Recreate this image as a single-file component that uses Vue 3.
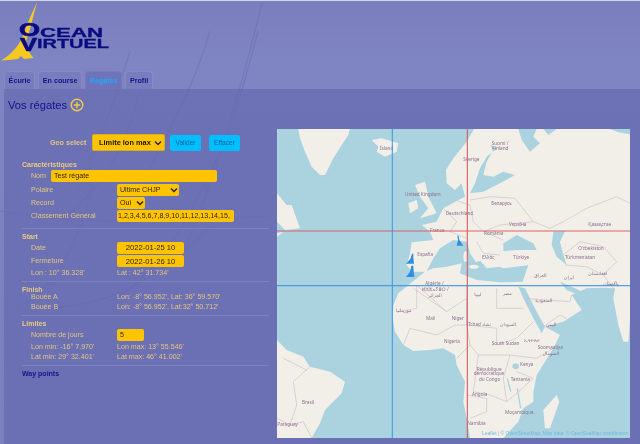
<script setup>
const tabs = ['Écurie', 'En course', 'Régates', 'Profil'];

const labels = [
  [330, 75, 'Ísland'], [405, 213, 'United Kingdom'], [527, 270, 'Deutschland'], [480, 320, 'France'],
  [442, 392, 'España'], [580, 107, 'Sverige'], [665, 60, 'Suomi /'], [667, 74, 'Finland'],
  [664, 239, 'Беларусь'], [717, 303, 'Україна'], [955, 303, 'Қазақстан'], [642, 330, 'România'],
  [925, 376, 'Oʻzbekiston'], [885, 401, 'Türkmenistan'], [730, 401, 'Türkiye'], [636, 403, 'Ελλάς'],
  [466, 481, 'Algérie /'], [455, 499, 'ⵍⵣⵣⴰⵢⴻⵔ /'], [475, 515, 'الجزائر'], [378, 560, 'موريتانيا'],
  [468, 585, 'Mali'], [545, 585, 'Niger'], [594, 602, 'Tchad'], [636, 602, 'تشاد'],
  [690, 602, 'السودان'], [613, 512, 'ليبيا'], [698, 510, 'مصر'], [795, 532, 'السعودية'],
  [828, 602, 'اليمن'], [522, 653, 'Nigeria'], [665, 661, 'South Sudan'], [762, 651, 'ኢትዮጵያ'],
  [803, 673, 'Soomaaliya'], [818, 690, 'الصومال'], [750, 723, 'Kenya'], [620, 737, 'République'],
  [611, 751, 'démocratique'], [627, 768, 'du Congo'], [722, 769, 'Tanzania'], [606, 812, 'Angola'],
  [705, 866, 'Moçambique'], [592, 900, 'Namibia'], [96, 837, 'Brasil'], [22, 903, 'Paraguay'],
  [792, 456, 'العراق'], [882, 463, 'ايران'], [955, 449, 'افغانستان'], [1000, 480, 'پاکستان']
];

const borders = [
  'M555 225 L600 240 L610 290 L640 320 L700 345',
  'M520 250 L560 290 L540 320 L590 340',
  'M600 225 L660 215 L735 220 L790 290 L840 310',
  'M640 320 L690 300 L790 290',
  'M620 350 L640 385 L690 390',
  'M840 310 L880 290 L950 250 L1040 215 L1080 235',
  'M880 390 L930 350 L1000 365 L1040 410 L1000 450',
  'M885 420 L950 425 L1000 450 L1030 490',
  'M430 490 L530 560 L590 520 L590 600 L680 610',
  'M385 560 L440 550 L440 480 L530 560',
  'M590 480 L590 600 L600 660 L560 700',
  'M680 490 L680 550 L760 550',
  'M400 660 L420 610 L500 630 L555 600 L590 600',
  'M680 610 L680 660 L740 640 L790 590',
  'M600 660 L625 690 L720 690 L800 700 L850 670',
  'M625 690 L610 800 L660 810 L710 830 L745 800',
  'M720 690 L700 760 L710 830',
  'M590 810 L650 820 L650 860 L600 880',
  'M745 800 L790 760 L740 740',
  'M760 520 L900 530 L905 510',
  'M820 605 L870 570 L890 580',
  'M120 725 L70 770 L80 840 L60 900 L21 880',
  'M40 700 L110 735',
  'M125 939 L100 890 L60 900'
];
</script>

<template>
  <div class="page">
    <svg class="streaks" viewBox="0 0 640 444" aria-hidden="true">
      <path d="M262 2 C250 50 236 110 205 190" />
      <path d="M210 30 C196 80 170 130 125 215" />
      <path d="M130 50 C118 90 108 120 78 190" />
      <path d="M258 30 C240 100 225 150 180 260" />
      <path d="M140 90 C125 150 100 190 60 220" />
      <path d="M230 130 C200 190 170 270 110 300" />
      <path d="M95 170 C85 230 60 280 22 305" />
      <path d="M0 210 C70 225 170 220 270 215" />
      <path d="M30 306 C90 310 150 290 210 225" />
    </svg>

    <header class="logo">
      <svg width="120" height="62" viewBox="0 0 120 62">
        <path class="sail" d="M37 1 L30 28 L25.5 42 C27 48 30 53 33.5 57 L24 58 L21 55 L18 58 C12 59 6 59 1 59.5 C12 53 20 44 24 32 C28 20 33 10 37 1Z" />
        <text class="logo-big" x="19" y="35" textLength="21" lengthAdjust="spacingAndGlyphs">O</text>
        <text class="logo-small" x="40" y="36" textLength="63" lengthAdjust="spacingAndGlyphs">CEAN</text>
        <text class="logo-big" x="20" y="50" textLength="17" lengthAdjust="spacingAndGlyphs">V</text>
        <text class="logo-small" x="37" y="47" textLength="72" lengthAdjust="spacingAndGlyphs">IRTUEL</text>
      </svg>
    </header>

    <nav class="tabs">
      <a v-for="tab in tabs" :key="tab" class="tab" :class="{ active: tab === 'Régates' }">{{ tab }}</a>
    </nav>

    <main class="panel">
      <h1 class="title">
        Vos régates
        <svg class="add" width="14" height="14" viewBox="0 0 14 14">
          <circle cx="7" cy="7" r="5.8" />
          <path d="M3.8 7H10.2M7 3.8V10.2" />
        </svg>
      </h1>

      <div class="content">
        <form class="form" @submit.prevent>
          <div class="geo">
            <label>Geo select</label>
            <select class="geo-select"><option>Limite lon max</option></select>
            <button class="btn">Valider</button>
            <button class="btn">Effacer</button>
          </div>

          <section class="block first">
            <h2>Caractéristiques</h2>
            <div class="name-row">
              <label>Nom</label>
              <input class="field name" value="Test régate" />
            </div>
            <div class="row tall">
              <label>Polaire</label>
              <select class="field pick polar"><option>Ultime CHJP</option></select>
            </div>
            <div class="row tall">
              <label>Record</label>
              <select class="field pick record"><option>Oui</option></select>
            </div>
            <div class="row tall">
              <label>Classement Général</label>
              <input class="field ranking" value="1,2,3,4,5,6,7,8,9,10,11,12,13,14,15," />
            </div>
          </section>

          <section class="block">
            <h2>Start</h2>
            <div class="row tall">
              <label>Date</label>
              <input class="field date" value="2022-01-25 10" />
            </div>
            <div class="row tall">
              <label>Fermeture</label>
              <input class="field date" value="2022-01-26 10" />
            </div>
            <div class="row">
              <label>Lon : 10° 36.328'</label>
              <span>Lat : 42° 31.734'</span>
            </div>
          </section>

          <section class="block tight">
            <h2>Finish</h2>
            <div class="row">
              <label>Bouée A</label>
              <span>Lon: -8° 56.952', Lat: 36° 59.570'</span>
            </div>
            <div class="row">
              <label>Bouée B</label>
              <span>Lon: -8° 56.952', Lat:32° 50.712'</span>
            </div>
          </section>

          <section class="block">
            <h2>Limites</h2>
            <div class="row tall">
              <label>Nombre de jours</label>
              <input class="field days" value="5" />
            </div>
            <div class="row">
              <label>Lon min: -16° 7.970'</label>
              <span>Lon max: 13° 55.546'</span>
            </div>
            <div class="row">
              <label>Lat min: 29° 32.401'</label>
              <span>Lat max: 46° 41.002'</span>
            </div>
          </section>

          <section class="block last">
            <h2 class="waypoints">Way points</h2>
          </section>
        </form>

        <div class="map">
          <svg class="map-art" viewBox="21 12 1059 927" preserveAspectRatio="none">
            <rect x="21" y="12" width="1059" height="927" class="sea" />
            <path class="land" d="M85 12 L240 12 L235 30 L215 60 L190 100 L165 150 L150 150 L125 125 L105 80 L90 40Z" />
            <path class="land" d="M305 45 L335 40 L385 55 L380 80 L345 95 L320 80 L325 65Z" />
            <path class="land" d="M435 180 L465 170 L475 215 L500 265 L450 280 L475 250 L450 215Z" />
            <path class="land" d="M415 235 L440 225 L445 250 L420 265Z" />
            <path class="land" d="M21 205 L50 240 L65 240 L90 310 L45 315 L21 290Z" />
            <path class="land" d="M21 325 L40 320 L21 335Z" />
            <path class="land" d="M21 645 L50 675 L100 695 L120 725 L180 740 L225 770 L215 805 L165 855 L150 895 L125 939 L21 939Z" />
            <path class="land" d="M820 855 L860 810 L868 830 L840 910 L825 910Z" />
            <path class="land" d="M612 12 L590 50 L550 100 L528 135 L530 175 L555 195 L575 175 L585 215 L565 225 L520 250 L500 290 L455 300 L480 320 L490 345 L425 352 L420 385 L410 420 L425 440 L465 440 L415 480 L385 505 L370 540 L368 580 L375 620 L400 660 L430 678 L480 675 L520 670 L555 690 L560 720 L585 770 L580 830 L590 880 L600 939 L700 939 L745 890 L760 850 L790 830 L790 800 L800 750 L850 670 L870 630 L825 605 L880 590 L935 555 L905 510 L950 490 L1000 488 L1035 490 L1030 520 L1045 600 L1060 650 L1075 650 L1080 580 L1080 12Z" />
            <path class="sea" d="M470 438 L490 400 L510 370 L550 345 L590 350 L625 400 L650 430 L690 425 L700 430 L775 420 L758 470 L690 472 L620 465 L570 445 L575 415 L530 425 L490 430Z" />
            <path class="land" d="M590 343 L620 368 L642 402 L618 412 L600 385Z" />
            <path class="land" d="M640 385 L662 422 L645 422Z" />
            <path class="land" d="M700 428 L690 390 L770 395 L775 420Z" />
            <path class="sea" d="M700 355 L740 330 L790 355 L800 375 L750 375 L700 378Z" />
            <path class="sea" d="M850 320 L885 318 L870 350 L880 390 L890 420 L860 395 L845 360Z" />
            <path class="sea" d="M660 60 L682 70 L650 95 L630 130 L615 175 L600 205 L640 200 L680 180 L735 150 L700 140 L670 155 L640 150 L650 110 L670 75Z" />
            <path class="sea" d="M745 12 L755 45 L780 80 L810 55 L790 35 L800 12Z" />
            <path class="sea" d="M820 12 L860 12 L835 30Z" />
            <path class="sea" d="M1020 12 L1080 12 L1080 28 L1045 22Z" />
            <path class="sea" d="M745 485 L765 490 L800 560 L825 605 L815 625 L790 580 L760 520Z" />
            <path class="sea" d="M870 470 L915 490 L945 505 L925 510 L890 495Z" />
            <ellipse class="sea" cx="737" cy="724" rx="10" ry="9" />
            <path class="lake" d="M712 760 L722 800 M742 790 L752 850" />
            <ellipse class="land" cx="587" cy="395" rx="7" ry="16" />
            <ellipse class="land" cx="612" cy="425" rx="14" ry="6" />
            <path v-for="d in borders" :key="d" class="border" :d="d" />
            <text v-for="l in labels" :key="l[2] + l[0]" class="place" :x="l[0]" :y="l[1]">{{ l[2] }}</text>
            <path class="line red" d="M21 318 H1080 M592 12 V939" />
            <path class="line blue" d="M21 482 H1080 M367 12 V939" />
            <g class="marker">
              <path d="M426 386 L430 386 L430 398 L432 416 L408 416 L421 402Z" />
              <path d="M424 422 L430 422 L431 440 L433 456 L408 456 L420 440Z" />
              <path d="M562 332 L566 332 L568 345 L580 362 L560 362 L564 345Z" />
            </g>
          </svg>
          <div class="attribution">Leaflet | © OpenStreetMap, Map data: © OpenSeaMap contributors</div>
        </div>
      </div>
    </main>
  </div>
</template>

<style>
html, body {
  margin: 0;
  background: #7a7fbe;
}
</style>

<style scoped>
.page {
  position: relative;
  display: flex;
  flex-direction: column;
  height: 443px;
  overflow: hidden;
  border-top: 1px solid #d5d7ee;
  background: linear-gradient(#7a7ebd, #7f84c2 60px, #7a7fbe);
  font-family: "Liberation Sans", Arial, sans-serif;
  filter: blur(0.45px);
}
.streaks {
  position: absolute;
  inset: 0;
  width: 640px;
  height: 444px;
  pointer-events: none;
}
.streaks path {
  fill: none;
  stroke: #5a5fae;
  stroke-width: 1.2;
  opacity: 0.3;
}
.logo {
  position: relative;
  height: 70px;
  flex: none;
}
.logo svg {
  display: block;
}
.sail {
  fill: #f5c921;
}
.logo-big,
.logo-small {
  fill: #0b0b80;
  font-weight: 700;
}
.logo-big {
  font-size: 18px;
  stroke: #0b0b80;
  stroke-width: 0.7;
}
.logo-small {
  font-size: 13px;
  stroke: #0b0b80;
  stroke-width: 0.3;
}
.tabs {
  position: relative;
  display: flex;
  flex: none;
  height: 18px;
  padding-left: 4px;
  gap: 3px;
}
.tab {
  padding: 0 3.6px;
  line-height: 18px;
  font-size: 7.2px;
  font-weight: 700;
  color: #14148a;
  background: rgba(106, 110, 180, 0.3);
  border: 1px solid #8589c6;
  border-bottom: 0;
  border-radius: 4px 4px 0 0;
}
.active {
  color: #1ea9ff;
  background: #6f74b8;
  border-color: #777bbd;
}
.panel {
  position: relative;
  flex: 1;
  margin-left: 4px;
  background: rgba(101, 106, 177, 0.7);
}
.title {
  display: flex;
  align-items: center;
  gap: 3px;
  margin: 0;
  padding: 6px 0 0 4px;
  height: 20px;
  font-size: 11.2px;
  font-weight: 400;
  color: #12128c;
}
.add circle,
.add path {
  fill: none;
  stroke: #f0c94a;
  stroke-width: 1.4;
}
.content {
  display: flex;
  margin-top: 3px;
}
.form {
  width: 265px;
  flex: none;
  font-size: 7.1px;
  color: #e2c67c;
}
.geo {
  display: flex;
  align-items: center;
  height: 17px;
  margin-top: 16px;
  padding-left: 46px;
  font-weight: 700;
}
.geo label {
  width: 36px;
  white-space: nowrap;
  font-size: 7.2px;
}
.geo-select {
  appearance: none;
  width: 73px;
  height: 17px;
  margin-left: 6px;
  padding: 0 0 0 6px;
  font: 700 7.4px "Liberation Sans", Arial, sans-serif;
  color: #17170a;
  background: #ffc400 url("data:image/svg+xml,%3Csvg xmlns='http://www.w3.org/2000/svg' width='8' height='6'%3E%3Cpath d='M1 1.5l3 3 3-3' fill='none' stroke='%23222' stroke-width='1.4'/%3E%3C/svg%3E") no-repeat right 2px center;
  border: 1px solid #d8ad20;
  border-radius: 2px;
}
.btn {
  width: 31px;
  height: 16px;
  margin-left: 5px;
  padding: 0;
  font: 6.6px "Liberation Sans", Arial, sans-serif;
  color: #14609c;
  background: #00bfff;
  border: 0;
  border-radius: 2px;
}
.btn:last-child {
  margin-left: 8px;
}
.block {
  margin-left: 18px;
  padding-bottom: 3px;
  border-bottom: 1px solid #7d82bd;
}
.first {
  margin-top: 6px;
  padding-bottom: 5px;
}
.last {
  border-bottom: 0;
}
.block h2 {
  margin: 0;
  padding-top: 3px;
  font-size: 7px;
  line-height: 9px;
  font-weight: 700;
  color: #e8cb7e;
}
.tight {
  padding-bottom: 3.5px;
}
.block.tight h2 {
  margin-bottom: -2px;
}
.block .waypoints {
  color: #14148a;
}
.name-row {
  display: flex;
  align-items: center;
  height: 14px;
  padding-left: 9px;
}
.name-row label {
  width: 20px;
}
.row {
  display: grid;
  grid-template-columns: 86px auto;
  align-items: center;
  justify-items: start;
  height: 10px;
  padding-left: 9px;
  white-space: nowrap;
}
.tall {
  height: 13.4px;
}
.field {
  box-sizing: border-box;
  height: 12px;
  padding: 0 3px;
  font: 7.1px "Liberation Sans", Arial, sans-serif;
  color: #2a2500;
  background: #ffc400;
  border: 0;
  border-radius: 2px;
  outline: none;
}
.pick {
  appearance: none;
  background: #ffc400 url("data:image/svg+xml,%3Csvg xmlns='http://www.w3.org/2000/svg' width='8' height='6'%3E%3Cpath d='M1 1.5l3 3 3-3' fill='none' stroke='%23222' stroke-width='1.4'/%3E%3C/svg%3E") no-repeat right 1px center;
}
.name {
  width: 166px;
}
.polar {
  width: 62px;
}
.record {
  width: 28px;
}
.ranking {
  width: 117px;
  padding: 0 1px;
}
.date {
  width: 67px;
  font-size: 7.6px;
  text-align: center;
}
.days {
  width: 27px;
}
.map {
  position: relative;
  width: 353px;
  height: 309px;
  margin: 11px 0 0 8px;
  flex: none;
  overflow: hidden;
}
.map-art {
  display: block;
  width: 353px;
  height: 309px;
}
.sea {
  fill: #abd3df;
}
.land {
  fill: #f2efe9;
}
.lake {
  fill: none;
  stroke: #abd3df;
  stroke-width: 4;
}
.border {
  fill: none;
  stroke: #cdbfc8;
  stroke-width: 2;
}
.place {
  font: 14px "Noto Sans", "DejaVu Sans", sans-serif;
  fill: #8b6f8c;
}
.line {
  fill: none;
  stroke-width: 3.5;
  opacity: 0.9;
}
.red {
  stroke: #d4545a;
}
.blue {
  stroke: #3e95e6;
}
.marker path {
  fill: #2f8fe0;
}
.attribution {
  position: absolute;
  right: 2px;
  bottom: 1px;
  font-size: 4.9px;
  line-height: 7px;
  color: #6cb8df;
  white-space: nowrap;
}
</style>
